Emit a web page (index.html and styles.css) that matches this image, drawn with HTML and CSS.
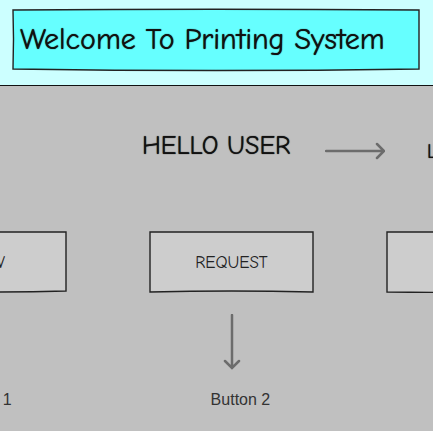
FILE: index.html
```html
<!DOCTYPE html>
<html lang="en">
<head>
<meta charset="utf-8">
<title>Printing System</title>
<link rel="stylesheet" href="styles.css">
</head>
<body>
<header class="banner">
  <div class="title-box">
    <svg class="outline fill-title" viewBox="0 0 408 62" preserveAspectRatio="none" aria-hidden="true"><path d="M1 1Q200 -0.500 407 1L407 60Q204 63 1 60Q2 30 1 1Z"/></svg>
    <h1 class="title">Welcome To Printing System</h1>
  </div>
</header>
<main class="board">
  <div class="greeting">
    <h2 class="hello">HELLO USER</h2>
    <svg class="arrow-right" viewBox="0 0 60 20" aria-hidden="true"><path d="M1 10H58M52 3L59 10L52 17"/></svg>
    <a class="logout" href="#">LOGOUT</a>
  </div>
  <div class="actions">
    <button class="action" type="button">
      <svg class="outline" viewBox="0 0 165 62" preserveAspectRatio="none" aria-hidden="true"><path d="M1 1H164V60Q82 62 1 60Z"/></svg>
      <span class="label">VIEW</span>
    </button>
    <button class="action" type="button">
      <svg class="outline" viewBox="0 0 165 62" preserveAspectRatio="none" aria-hidden="true"><path d="M1 1H164V61Q82 59 1 61Z"/></svg>
      <span class="label">REQUEST</span>
    </button>
    <button class="action" type="button">
      <svg class="outline" viewBox="0 0 165 62" preserveAspectRatio="none" aria-hidden="true"><path d="M1 1H164V61Q82 62 1 61Z"/></svg>
      <span class="label">STATUS</span>
    </button>
    <svg class="arrow-down" viewBox="0 0 20 56" aria-hidden="true"><path d="M10 1V53M3 47L10 54L17 47"/></svg>
  </div>
  <div class="captions">
    <span>Button 1</span>
    <span>Button 2</span>
  </div>
</main>
</body>
</html>
```
FILE: styles.css
```css
* { box-sizing: border-box; }

body {
  margin: 0;
  min-height: 100vh;
  background: #c0c0c0;
  color: #111;
  font-family: "Comic Sans MS", "Comic Neue", "Noto Sans", sans-serif;
  overflow: hidden;
}

.banner {
  padding: 9px 13px 14px 12px;
  background: #ccffff;
  border-bottom: 1px solid #111;
}

.title-box {
  position: relative;
  height: 62px;
  display: flex;
  align-items: center;
  padding-left: 8px;
}

.outline {
  position: absolute;
  inset: 0;
  width: 100%;
  height: 100%;
  overflow: visible;
  fill: #cdcdcd;
  stroke: #222;
  stroke-width: 1.4;
}

.fill-title { fill: #66ffff; }

.title {
  position: relative;
  margin: 0;
  font-size: 30px;
  line-height: 40px;
  font-weight: 400;
  white-space: nowrap;
  text-shadow: 0 0 1px #111;
}

.board { overflow: hidden; }

.greeting {
  display: flex;
  align-items: center;
  height: 130px;
  padding-left: 142px;
  white-space: nowrap;
}

.hello {
  flex: none;
  margin: 0;
  padding-bottom: 10px;
  width: 183px;
  font-size: 26px;
  line-height: 32px;
  font-weight: 400;
  text-shadow: 0 0 1px #111;
}

.arrow-right {
  flex: none;
  width: 60px;
  height: 20px;
  margin-right: 42px;
}

.arrow-right, .arrow-down {
  fill: none;
  stroke: #6c6c6c;
  stroke-width: 2.5;
  stroke-linecap: round;
}

.logout {
  color: inherit;
  font-size: 20px;
  text-decoration: none;
  text-shadow: 0 0 1px #111;
}

.actions {
  display: grid;
  grid-template-columns: 175px 165px 165px;
  column-gap: 72px;
  row-gap: 21px;
  margin: 15px 0 0 -98px;
}

.action {
  position: relative;
  width: 165px;
  height: 62px;
  padding: 0;
  border: 0;
  background: none;
  color: #222;
  font-family: inherit;
  font-size: 17px;
}

.label { position: relative; }

.arrow-down {
  grid-column: 2;
  justify-self: center;
  width: 20px;
  height: 56px;
}

.captions {
  display: flex;
  gap: 199px;
  margin: 20px 0 0 -48px;
  color: #333;
  font-family: "Liberation Sans", Arial, sans-serif;
  font-size: 16px;
  line-height: 20px;
  white-space: nowrap;
}
```
